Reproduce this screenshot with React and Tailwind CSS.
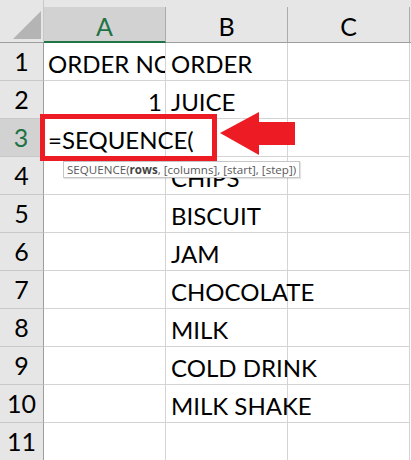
import React from 'react'

const rows = [
    { n: 1, a: 'ORDER NO', b: 'ORDER' },
    { n: 2, a: '1', b: 'JUICE', right: true },
    { n: 3, a: '=SEQUENCE(', b: '', active: true },
    { n: 4, a: '', b: 'CHIPS' },
    { n: 5, a: '', b: 'BISCUIT' },
    { n: 6, a: '', b: 'JAM' },
    { n: 7, a: '', b: 'CHOCOLATE' },
    { n: 8, a: '', b: 'MILK' },
    { n: 9, a: '', b: 'COLD DRINK' },
    { n: 10, a: '', b: 'MILK SHAKE' },
    { n: 11, a: '', b: '' },
]

const font = { fontFamily: 'Lato, "Open Sans", sans-serif' }

const App = () => {
    return (
        <div className="relative w-[411px] h-[460px] overflow-hidden bg-white text-black" style={font}>
            {/* header row */}
            <div className="flex h-[43px] bg-[#e6e6e6] border-b border-[#9e9e9e]">
                <div className="relative w-[44px] shrink-0 border-r border-[#c8c8c8]">
                    <svg className="absolute left-[13px] top-[11px]" width="29" height="29" viewBox="0 0 29 29">
                        <polygon points="28,0 28,28 0,28" fill="#b4b4b4" />
                    </svg>
                </div>
                <div className="w-[122px] shrink-0 mt-[7px] -mb-px bg-[#d2d2d2] border-b-2 border-[#217346] border-r border-r-[#ababab] flex items-center justify-center text-[25px] text-[#217346] leading-none pt-1">
                    A
                </div>
                <div className="w-[122px] shrink-0 mt-[7px] border-r border-[#ababab] flex items-center justify-center text-[25px] leading-none pt-1">
                    B
                </div>
                <div className="w-[122px] shrink-0 mt-[7px] border-r border-[#ababab] flex items-center justify-center text-[25px] leading-none pt-1">
                    C
                </div>
            </div>

            {rows.map((r) => (
                <div key={r.n} className="flex h-[38px]">
                    <div
                        className={`w-[44px] shrink-0 flex items-center justify-center text-[25px] leading-none border-b border-[#c8c8c8] ${
                            r.active
                                ? 'bg-[#d2d2d2] text-[#217346] border-r-2 border-r-[#217346]'
                                : 'bg-[#e6e6e6] border-r border-r-[#9e9e9e]'
                        }`}
                    >
                        {r.n}
                    </div>
                    <div
                        className={`relative w-[122px] shrink-0 border-b border-r border-[#d4d4d4] flex items-end pb-[4px] pl-[4px] pr-[3px] text-[24px] leading-none whitespace-nowrap ${
                            r.right ? 'justify-end' : ''
                        } ${r.active ? 'overflow-visible z-10' : 'overflow-hidden'}`}
                    >
                        <span>{r.a}</span>
                        {r.active && <span className="inline-block w-px h-[26px] bg-black ml-[1px] mb-[-2px]" />}
                    </div>
                    <div className="w-[122px] shrink-0 border-b border-r border-[#d4d4d4] flex items-end pb-[4px] px-[5px] text-[24px] leading-none whitespace-nowrap overflow-visible">
                        {r.b}
                    </div>
                    <div className="w-[122px] shrink-0 border-b border-r border-[#d4d4d4]" />
                </div>
            ))}

            {/* red highlight box */}
            <div className="absolute left-[40px] top-[114px] w-[177px] h-[47px] border-[5px] border-[#ed1c24] z-20" />

            {/* arrow */}
            <svg className="absolute left-[219px] top-[111px] z-20" width="78" height="46" viewBox="0 0 78 46">
                <polygon points="1,22 40,1 40,11 76,11 76,34 40,34 40,44" fill="#ed1c24" />
            </svg>

            {/* function tooltip */}
            <div
                className="absolute left-[63px] top-[161px] h-[17px] px-[3px] flex items-center bg-white border border-[#c6c6c6] text-[11.6px] text-[#595959] whitespace-nowrap z-30 shadow-[1px_1px_1px_rgba(0,0,0,0.1)]"
                style={{ fontFamily: '"Open Sans", sans-serif' }}
            >
                SEQUENCE(<b className="font-bold text-[#444]">rows</b>, [columns], [start], [step])
            </div>
        </div>
    )
}

export default App
